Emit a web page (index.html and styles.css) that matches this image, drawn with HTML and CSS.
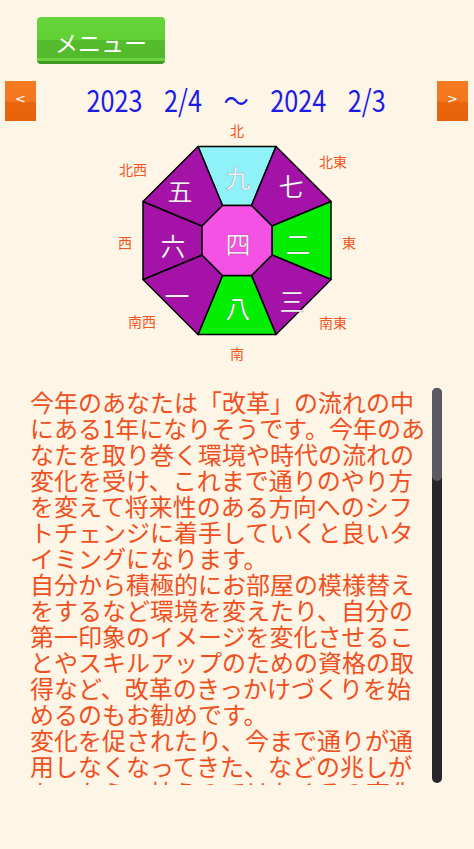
FILE: index.html
```html
<!DOCTYPE html>
<html lang="ja">
<head>
<meta charset="utf-8">
<link rel="stylesheet" href="styles.css">
</head>
<body>
<div class="page">
  <div class="top">
    <button class="menu-btn">メニュー</button>
  </div>
  <div class="nav">
    <button class="arrow">&lt;</button>
    <div class="period"><span class="period-text">2023 2/4 〜 2024 2/3</span></div>
    <button class="arrow">&gt;</button>
  </div>
  <svg class="chart" width="260" height="245" viewBox="0 0 260 245">
    <g stroke="#000" stroke-width="1.5" stroke-linejoin="round">
      <polygon class="cyan" points="91,25.5 169,25.5 144.5,84.5 115.5,84.5"/>
      <polygon class="purple" points="169,25.5 224,80.5 165,105 144.5,84.5"/>
      <polygon class="green" points="224,80.5 224,158.5 165,134 165,105"/>
      <polygon class="purple" points="224,158.5 169,213.5 144.5,154.5 165,134"/>
      <polygon class="green" points="169,213.5 91,213.5 115.5,154.5 144.5,154.5"/>
      <polygon class="purple" points="91,213.5 36,158.5 95,134 115.5,154.5"/>
      <polygon class="purple" points="36,158.5 36,80.5 95,105 95,134"/>
      <polygon class="purple" points="36,80.5 91,25.5 115.5,84.5 95,105"/>
      <polygon class="pink" points="115.5,84.5 144.5,84.5 165,105 165,134 144.5,154.5 115.5,154.5 95,134 95,105"/>
    </g>
    <g class="num">
      <text x="131" y="56">九</text>
      <text x="184" y="64">七</text>
      <text x="191" y="122">二</text>
      <text x="185" y="179">三</text>
      <text x="131" y="186">八</text>
      <text x="70" y="174">一</text>
      <text x="66" y="124">六</text>
      <text x="73" y="69">五</text>
      <text x="131" y="122">四</text>
    </g>
    <g class="dir">
      <text x="130" y="9">北</text>
      <text x="226" y="40">北東</text>
      <text x="242" y="121">東</text>
      <text x="226" y="201">南東</text>
      <text x="130" y="232">南</text>
      <text x="35" y="200">南西</text>
      <text x="18" y="121">西</text>
      <text x="26" y="48">北西</text>
    </g>
  </svg>
  <div class="reading">
    <div class="text">
      <p>今年のあなたは「改革」の流れの中にある1年になりそうです。今年のあなたを取り巻く環境や時代の流れの変化を受け、これまで通りのやり方を変えて将来性のある方向へのシフトチェンジに着手していくと良いタイミングになります。</p>
      <p>自分から積極的にお部屋の模様替えをするなど環境を変えたり、自分の第一印象のイメージを変化させることやスキルアップのための資格の取得など、改革のきっかけづくりを始めるのもお勧めです。</p>
      <p>変化を促されたり、今まで通りが通用しなくなってきた、などの兆しがあったら、抗うのではなくその変化を受け入れてみましょう。</p>
    </div>
    <div class="scrollbar"><div class="thumb"></div></div>
  </div>
</div>
</body>
</html>
```

FILE: styles.css
```css
html, body {
  margin: 0;
  padding: 0;
  background: #fdf5e6;
}
body {
  font-family: "Noto Sans CJK JP", "Noto Sans", sans-serif;
  width: 474px;
  height: 849px;
  overflow: hidden;
}
.page {
  display: flex;
  flex-direction: column;
}
.top {
  padding: 17px 0 0 37px;
  height: 47px;
}
.menu-btn {
  width: 128px;
  height: 47px;
  border: none;
  border-radius: 4px;
  padding: 4px 0 0;
  background: linear-gradient(#66d53a 0, #60d034 48%, #55bd2d 48%, #53ba2b 88%, #6cd240 88%, #6cd240 93%, #3f9a22 93%);
  color: #fff;
  font-family: "Noto Sans CJK JP", sans-serif;
  font-size: 23px;
  line-height: 1;
}
.nav {
  margin-top: 17px;
  height: 40px;
  display: flex;
  align-items: stretch;
  justify-content: space-between;
  padding: 0 6px 0 5px;
}
.arrow {
  width: 31px;
  height: 40px;
  border: none;
  padding: 0 0 6px;
  background: linear-gradient(#f57b22 0, #f37720 52%, #e8650d 52%, #e6620b 100%);
  color: #fff;
  font-family: "DejaVu Sans", sans-serif;
  font-size: 13px;
  line-height: 1;
}
.period {
  flex: 1;
  display: flex;
  justify-content: center;
  align-items: center;
  padding-bottom: 4px;
  color: #1c1ce6;
  font-family: "Noto Sans CJK JP", sans-serif;
  font-size: 30px;
  white-space: nowrap;
}
.period-text {
  display: inline-block;
  line-height: 30px;
  transform: scaleX(0.84);
  word-spacing: 19px;
}
.chart {
  display: block;
  margin-left: 107px;
  overflow: visible;
}
.cyan { fill: #8ff2f8; }
.purple { fill: #a512a8; }
.green { fill: #04ee04; }
.pink { fill: #f452e4; }
.num text {
  fill: #fff;
  font-family: "Noto Sans CJK JP", sans-serif;
  font-size: 25px;
  text-anchor: middle;
  dominant-baseline: central;
  stroke: rgba(60, 0, 60, 0.35);
  stroke-width: 0.6px;
}
.dir text {
  fill: #f0561e;
  font-family: "Noto Sans CJK JP", sans-serif;
  font-size: 14px;
  text-anchor: middle;
  dominant-baseline: central;
}
.reading {
  margin: 22px 0 0 30px;
  width: 412px;
  height: 397px;
  display: flex;
}
.text {
  flex: 1;
  overflow: hidden;
  padding-top: 1px;
  color: #f0501e;
  font-size: 24px;
  line-height: 26px;
}
.text p {
  margin: 0;
}
.scrollbar {
  width: 10px;
  height: 395px;
  border-radius: 5px;
  background: #28262a;
}
.thumb {
  height: 93px;
  border-radius: 5px;
  background: #5c5a62;
}
```
